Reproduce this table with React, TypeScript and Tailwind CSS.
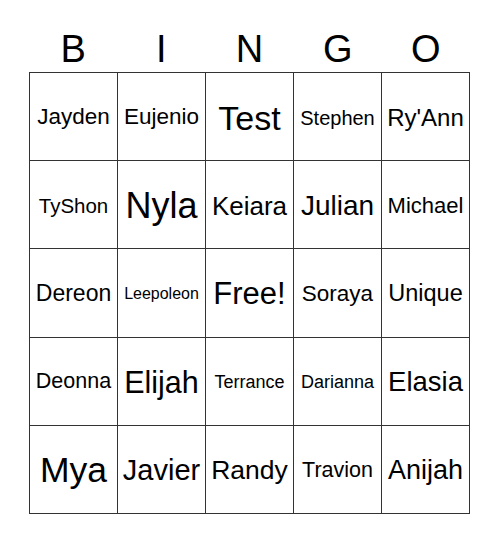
const letters = ["B", "I", "N", "G", "O"];

// name + font size in px, row by row
const cells: [string, string][] = [
  ["Jayden", "text-[22.5px]"],
  ["Eujenio", "text-[22.5px]"],
  ["Test", "text-[34px]"],
  ["Stephen", "text-[20px]"],
  ["Ry'Ann", "text-[24px]"],
  ["TyShon", "text-[20.5px]"],
  ["Nyla", "text-[36px]"],
  ["Keiara", "text-[26px]"],
  ["Julian", "text-[28px]"],
  ["Michael", "text-[22px]"],
  ["Dereon", "text-[23px]"],
  ["Leepoleon", "text-[16px]"],
  ["Free!", "text-[31px]"],
  ["Soraya", "text-[22.5px]"],
  ["Unique", "text-[23.5px]"],
  ["Deonna", "text-[21.5px]"],
  ["Elijah", "text-[30.5px]"],
  ["Terrance", "text-[18px]"],
  ["Darianna", "text-[18px]"],
  ["Elasia", "text-[27.5px]"],
  ["Mya", "text-[35.5px]"],
  ["Javier", "text-[29px]"],
  ["Randy", "text-[26.5px]"],
  ["Travion", "text-[21.5px]"],
  ["Anijah", "text-[27px]"],
];

export default function App() {
  return (
    <div className="h-[544px] w-[500px] bg-white pl-[29px] pt-[30px] font-['Liberation_Sans',Arial,sans-serif] text-black">
      <div className="grid w-[441px] grid-cols-5">
        {letters.map((l) => (
          <div key={l} className="text-center text-[38px] leading-[38px]">
            {l}
          </div>
        ))}
      </div>
      <div className="mt-[4px] grid h-[442px] w-[441px] grid-cols-5 grid-rows-5 gap-px bg-[#333] p-px">
        {cells.map(([name, size]) => (
          <div key={name} className={`flex items-center justify-center bg-white pt-[2px] leading-none whitespace-nowrap ${size}`}>
            {name}
          </div>
        ))}
      </div>
    </div>
  );
}
